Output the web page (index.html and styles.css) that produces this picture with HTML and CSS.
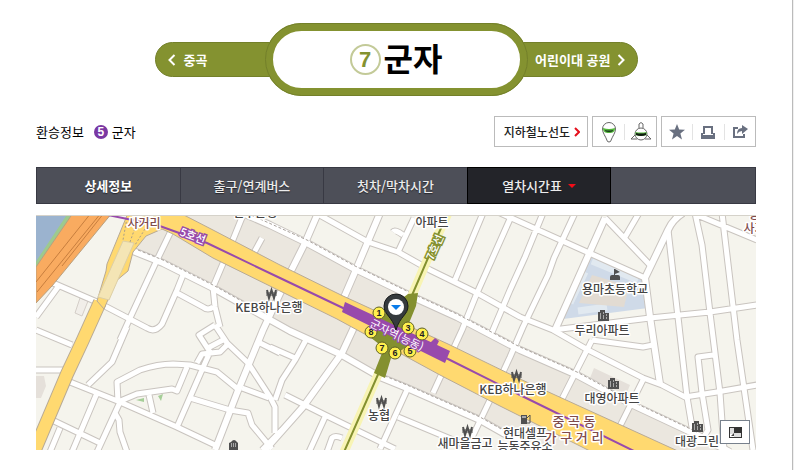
FILE: index.html
```
<!DOCTYPE html>
<html lang="ko">
<head>
<meta charset="utf-8">
<title>군자역 7호선</title>
<link rel="stylesheet" href="styles.css">
</head>
<body>
<main class="page">
  <header class="line-nav">
    <a class="side prev" href="#"><svg class="chevron" viewBox="0 0 8 12"><path d="M6.5 1 1.5 6l5 5"/></svg>중곡</a>
    <h1 class="station"><span class="line-no">7</span><span class="name">군자</span></h1>
    <a class="side next" href="#">어린이대 공원<svg class="chevron" viewBox="0 0 8 12"><path d="M1.500 1l5 5-5 5"/></svg></a>
  </header>

  <div class="info-row">
    <p class="transfer">환승정보 <a href="#"><span class="badge">5</span>군자</a></p>
    <div class="tools">
      <button class="box map-button">지하철노선도<svg class="arrow" viewBox="0 0 6 10"><path d="M1 1l4 4-4 4"/></svg></button>
      <div class="box pair">
        <button aria-label="지도 보기"><svg width="22" height="22" viewBox="0 0 22 22"><path d="M4.500 8a6.500 6.500 0 1 1 13 0c0 4-3 7-5 12.500q-1.500 1-3 0C7.500 15 4.500 12 4.500 8z" fill="#fff" stroke="#666"/><path d="M5 7q6 2 12 0c0 4-2 5-6 5S5 11 5 7z" fill="#54b63c"/><path d="M7 9q4 1 8 0c0 1-1 2-4 2s-4-1-4-2z" fill="#17351a"/></svg></button>
        <button aria-label="거리뷰 보기"><svg width="22" height="22" viewBox="0 0 22 22"><path d="M9 7V3q2-3 4 0v4M6 13l-5 5h6M16 13l5 5h-6" fill="#fff" stroke="#666"/><circle cx="11" cy="13" r="6" fill="#fff" stroke="#666"/><path d="M5.500 11q5.500 1 11 0v3q-5.500 2-11 0z" fill="#54b63c"/><path d="M6 12q5 1 10 0v2q-5 2-10 0z" fill="#101c12"/></svg></button>
      </div>
      <div class="box trio">
        <button aria-label="즐겨찾기"><svg width="16" height="16" viewBox="0 0 16 16"><path fill="#697080" d="M8 0l2.200 5.600 5.800.2-4.600 3.700L13 15.500 8 12l-5 3.500 1.600-6L0 5.800l5.800-.2z"/></svg></button>
        <button aria-label="인쇄"><svg width="16" height="16" viewBox="0 0 16 16"><path d="M4 10V3h8v7" fill="none" stroke="#697080" stroke-width="2"/><path d="M1 9h2v2h10V9h2v6H1z" fill="#697080"/></svg></button>
        <button aria-label="공유"><svg width="16" height="16" viewBox="0 0 16 16"><path d="M6 4H2v9h10v-3" fill="none" stroke="#697080" stroke-width="2"/><path d="M10 1l6 4-6 5V7Q7 7 5 10q0-6 5-6z" fill="#697080"/></svg></button>
      </div>
    </div>
  </div>

  <nav class="tabs">
    <a class="strong" href="#">상세정보</a>
    <a href="#">출구/연계버스</a>
    <a href="#">첫차/막차시간</a>
    <a class="current" href="#">열차시간표<span class="caret"></span></a>
  </nav>

  <section class="map">
    <svg class="canvas" viewBox="36 216 720 234" preserveAspectRatio="xMidYMid slice">
      <defs>
        <g id="roads">
          <path d="M243 215L230 247 213 287 215 307 220 327M215 325L227 343 248 363 270 397 275 407V433M173 227L157 260 130 318 120 340M127 327L112 362 88 385M53 283L97 302 147 328Q155 333 162 324L177 290 183 275M177 293L203 307Q208 311 213 307M58 287L36 317M36 330L72 345M36 370H64"/>
          <path d="M70 382L120 402 177 427 215 445M52 420L100 443M97 393L72 452M60 428L50 452M120 402L97 452M115 413L119 420 120 432 127 452M118 402L117 382 140 370Q158 364 173 364L190 365 217 372 239 390M242 388L269 398M118 402L137 394 172 389 177 391 187 367M149 395L153 413M177 427L205 363 210 352 199 335 215 325M197 363L202 354 220 352 227 345M206 349L223 340"/>
          <path d="M190 398L230 410 248 413 252 425 272 449M260 343L280 353M270 347L295 358M307 338L295 360 282 380 275 400M262 450L282 430M262 238L250 260"/>
          <path d="M407 390L380 449M398 417L470 447M285 395L325 415 395 449M325 417L309 452M327 452L332 438Q335 435 342 438M398 252L414 218M393 232Q395 229 403 235"/>
          <path d="M316 213L368 242 398 252 430 270 477 293 520 317 553 330 588 350 643 378 662 385 685 397 717 392 757 385M498 212L587 252 645 278M543 213L525 257 510 290 490 337"/>
          <path d="M483 213L455 280M510 219L477 293 462 330 433 393M575 213L554 258 548 275 523 327 510 357 490 400 466 450M592 340L560 403M605 218L650 265M639 213L625 237"/>
          <path d="M668 230L678 317 687 397 692 427 700 443M695 213L702 245 710 313 720 393 724 450M722 213L737 340 753 450M697 215L757 240M553 330L650 318 710 312 757 305M592 340L643 347 653 345M643 380L617 432M713 355L698 357 702 393 708 430 700 443"/>
        </g>
        <g id="avenues">
          <path d="M215 450L237 393 263 330 283 287 305 243 318 213M265 450L303 407 342 353 355 325M342 302L358 265 380 213M605 218L555 330M683 213Q673 219 668 230L645 278 650 317 660 384"/>
          <path d="M133 251L163 263 213 288 247 307 290 331 340 354 380 377 407 388 480 420 503 433 540 450"/>
          <path d="M240 212L270 225 307 243 353 268 413 297 457 317 520 350 577 375 633 405 697 435 730 452"/>
        </g>
        <g id="apartment"><path d="M0 2V11H11V3H7V0H2V2z" fill="#505050"/><path d="M2 4h1M5 3h1M2 6h1M5 6h1M8 5h1M2 8h1M5 8h1M8 8h1" stroke="#fff"/></g>
        <g id="bank" fill="none" stroke="#505050"><path d="M1 0l2 8 2.500-8L8 8l2-8" stroke-width="2"/><path d="M0 3h11M0 5h11"/></g>
      </defs>

      <rect x="36" y="215" width="720" height="235" fill="#f5f4ed"/>
      <path class="block" d="M165 213H245L307 243 353 268 413 297 457 317 520 350 577 375 633 405 697 435 730 452H545L480 420 380 377 290 331 213 288 133 251z"/>
      <path d="M36 213H70L36 268z" fill="#9bb3cf"/>
      <path d="M71 213L36 266" stroke="#9dca8e" stroke-width="5"/>
      <path d="M587 254L645 279 648 308 563 319z" fill="#cfdae8"/>
      <path d="M592 261L638 280M585 272L570 303M578 311L607 307" stroke="#e1e9f0" stroke-width="7"/>
      <path d="M592 275L629 286 624 307 579 303z" fill="#e2dbd2"/>
      <path d="M36 376h8l2 10-5 12h-5zM594 368l36 17-4 10-36-17z" fill="#e5e0da"/>
      <path d="M136 400l8-2v4zM158 396l5-2-2 7z" fill="#a5ce98"/>
      <path d="M80 298l8 3-6 15-7-3z" fill="#f1eee9" stroke="#d4cec8"/>

      <use href="#roads" class="casing"/>
      <use href="#avenues" class="casing wide"/>
      <use href="#roads" class="road"/>
      <use href="#avenues" class="road wide"/>
      <path class="steps" d="M251 215L307 240 353 265 413 294 457 314 520 347 577 372 633 402 697 432M138 250L163 260 213 285 247 304M380 374L407 385 480 417 503 430"/>

      <path d="M73 213H112L52 286 36 303V267z" fill="#f9ab60" stroke="#b9a07f"/>
      <path d="M101 213L37 292M104 213L62 266M91 213L36 282" fill="none" stroke="#c77e3e"/>
      <path class="main-casing" d="M100 302L82 342 67 374 34 452"/>
      <path class="main-road" d="M100 302L82 342 67 374 34 452"/>
      <path d="M128 213H180L213 230 280 265 343 296 448 344 520 379 680 452H592L500 406 440 375 337 319 213 258 173 234 162 229 146 236 133 252 128 271 116 281 104 309 97 301 106 271 107 264z" fill="#ffd970" stroke="#b8aa95"/>
      <path d="M123 241L134 243 109 300 98 297z" fill="#f4e5b5" stroke="#ddcfa5"/>
      <path d="M127 218L123 240M136 225L130 242M145 229L135 245" stroke="#a89d8a" stroke-dasharray="2 2"/>
      <path class="subway-seven-road" d="M448 213L437 237 410 300M380 370L344 452"/>
      <path class="subway-seven" d="M448 213L437 237 410 300M380 370L344 452"/>
      <path d="M408 294L418 293 416 306 407 328 410 344 391 358 385 378 374 373 384 348 370 337 388 309z" fill="#84902f"/>
      <path class="subway-five" d="M103 214L157 225 207 243 280 278 343 308 448 359 520 395 636 452"/>
      <path d="M345 302L450 351 445 363 342 312zM431 342l4-4 4 3-3 6z" fill="#984aac"/>

      <g class="line-name five"><text transform="translate(179 235) rotate(21)">5호선</text></g>
      <g class="line-name seven"><text transform="translate(433 261) rotate(-66)">7호선</text></g>
      <g class="exits">
        <circle cx="379" cy="313" r="6"/><circle cx="408" cy="328" r="6"/><circle cx="422" cy="334" r="6"/><circle cx="371" cy="332" r="6"/><circle cx="382" cy="348" r="6"/><circle cx="395" cy="353" r="6"/><circle cx="410" cy="351" r="6"/>
        <text x="379" y="316">1</text><text x="408" y="331">3</text><text x="422" y="337">4</text><text x="371" y="335">8</text><text x="382" y="351">7</text><text x="395" y="356">6</text><text x="410" y="354">5</text>
      </g>
      <text class="station-name" transform="translate(369 326) rotate(26)">군자역(능동)</text>
      <path d="M396 330C392 316 384 315 384 306a12 12 0 0 1 24 0c0 9-8 10-12 24z" fill="#353a3d" stroke="#16191b"/>
      <circle cx="396" cy="307" r="8" fill="#fff"/><path d="M391 305h10l-5 5z" fill="#087bea"/>

      <g class="place">
        <text x="269" y="312">KEB하나은행</text><text x="432" y="227">아파트</text>
        <text x="615" y="294">용마초등학교</text><text x="602" y="335">두리아파트</text>
        <text x="513" y="394">KEB하나은행</text><text x="612" y="403">대영아파트</text>
        <text x="379" y="420">농협</text><text x="465" y="448">새마을금고</text>
        <text x="525" y="438">현대셀프</text><text x="525" y="451">능동주유소</text>
        <text x="697" y="446">대광그린</text><text x="255" y="217">신구은행</text>
      </g>
      <g class="crossing">
        <text x="143" y="215">군자</text><text x="144" y="228">사거리</text>
        <text class="spaced" x="574" y="426">중 곡 동</text><text class="spaced" x="574" y="442">가 구 거 리</text>
        <text x="760" y="219">중곡</text><text x="760" y="233">사거리</text>
      </g>
      <use href="#bank" x="266" y="290"/><use href="#bank" x="376" y="398"/><use href="#bank" x="511" y="372"/><use href="#bank" x="462" y="427"/>
      <use href="#apartment" x="598" y="310"/><use href="#apartment" x="608" y="378"/><use href="#apartment" x="692" y="421"/>
      <path d="M610 280v-3q0-2 2-2h2v-6h1l5 3-5 2v1h3q2 0 2 2v3z" fill="#505050"/>
      <path d="M229 450v-7l2-1q3-4 6 0l1 1v7z" fill="#505050"/><path d="M231 444h6M231 446h6" stroke="#fff" stroke-dasharray="1 1"/>
      <path d="M521 424v-9h6v9z" fill="#505050"/><path d="M522 417h4" stroke="#fff"/><path d="M527 418l3-3v8h-3" fill="none" stroke="#505050"/>
    </svg>
    <button class="overview" aria-label="미니맵"><svg width="13" height="11" viewBox="0 0 13 11"><rect x=".5" y=".5" width="12" height="10" fill="#ddd" stroke="#333"/><path d="M5 1h7v5H5z" fill="#333"/><path d="M1 10V7h4v3z" fill="#fff"/><path d="M2 9l3-3v3z" fill="#444"/></svg></button>
  </section>
</main>
</body>
</html>
```
FILE: styles.css
```
* { box-sizing: border-box; }
body {
  margin: 0;
  background: #f0f0f0;
  color: #000;
  font: 13px/16px "Noto Sans CJK KR", "Liberation Sans", sans-serif;
}
a { color: inherit; text-decoration: none; }
button { padding: 0; border: 0; background: none; font: inherit; color: inherit; cursor: pointer; }
svg { display: block; }
.page {
  min-height: 100vh;
  margin-right: 1px;
  padding: 23px 36px 20px;
  border-right: 1px solid #bbb;
  background: #fff;
}

.line-nav { display: flex; align-items: center; justify-content: center; }
.side {
  display: flex;
  align-items: center;
  gap: 8px;
  width: 130px;
  height: 35px;
  padding: 0 12px;
  border: 1px solid #73802a;
  background: #849230;
  color: #fff;
  font-weight: 700;
}
.prev { margin-right: -20px; border-radius: 18px 0 0 18px; }
.next { gap: 6px; margin-left: -20px; border-radius: 0 18px 18px 0; justify-content: flex-end; }
.chevron { width: 8px; height: 12px; fill: none; stroke: #fff; stroke-width: 2; }
.station {
  position: relative;
  display: flex;
  align-items: center;
  justify-content: center;
  gap: 3px;
  width: 263px;
  height: 73px;
  margin: 0;
  border: 8px solid #849230;
  border-radius: 37px;
  outline: 1px solid #73802a;
  outline-offset: -1px;
  background: #fff;
  font-size: 32px;
  line-height: 40px;
}
.name { padding-bottom: 6px; }
.line-no {
  width: 31px;
  height: 31px;
  border: 2px solid #c3ca98;
  border-radius: 50%;
  color: #849230;
  font: bold 22px/27px "Liberation Sans", sans-serif;
  text-align: center;
}

.info-row { display: flex; align-items: center; justify-content: space-between; margin: 20px 0; }
.transfer, .transfer a { display: flex; align-items: center; margin: 0; }
.transfer { gap: 10px; }
.transfer a { gap: 4px; }
.badge {
  width: 14px;
  height: 14px;
  border-radius: 50%;
  background: #7a38a3;
  color: #fff;
  font: bold 12px/14px "Liberation Sans", sans-serif;
  text-align: center;
}
.tools { display: flex; gap: 4px; }
.box { display: flex; align-items: center; height: 31px; border: 1px solid #bbb; }
.map-button { gap: 4px; padding: 0 7px 0 9px; font-size: 12px; font-weight: 500; color: #222; }
.arrow { width: 6px; height: 10px; fill: none; stroke: #e5101c; stroke-width: 2; }
.pair button, .trio button {
  display: flex;
  flex: 1;
  align-items: center;
  justify-content: center;
  height: 16px;
}
.box button + button { border-left: 1px solid #e3e3e3; }
.pair { width: 65px; }
.trio { width: 95px; }

.tabs {
  display: grid;
  grid-template-columns: repeat(5, 1fr);
  height: 37px;
  border: 1px solid #383943;
  background: #4d4f58;
  color: #ececec;
}
.tabs a {
  display: flex;
  align-items: center;
  justify-content: center;
  gap: 6px;
  border-right: 1px solid #383943;
  font-weight: 500;
  text-shadow: 0 1px 1px #25262c;
}
.tabs .strong { color: #fff; font-weight: 700; }
.tabs .current { margin: -1px 0 -1px -1px; border: 1px solid #000; background: #232429; }
.caret { border: 4px solid transparent; border-top-color: #f20d18; border-bottom: 0; }

.map { position: relative; margin-top: 11px; border-top: 1px solid #d5d2ca; }
.canvas { width: 100%; height: 234px; font-family: "Noto Sans CJK KR", sans-serif; }
.block { fill: #ebe7df; }
.casing { fill: none; stroke: #c9c4bf; stroke-width: 7; stroke-linejoin: round; }
.casing.wide { stroke-width: 8; }
.road { fill: none; stroke: #fff; stroke-width: 5; stroke-linejoin: round; }
.road.wide { stroke-width: 6; }
.steps { fill: none; stroke: #aaa39d; stroke-width: 1; stroke-dasharray: 3 2; }
.main-casing { fill: none; stroke: #b8aa95; stroke-width: 14; }
.main-road { fill: none; stroke: #ffd970; stroke-width: 12; }
.subway-seven-road { fill: none; stroke: #f8f4b4; stroke-width: 9; }
.subway-seven { fill: none; stroke: #84902f; stroke-width: 2; }
.subway-five { fill: none; stroke: #984aac; stroke-width: 2; }
.line-name { font-size: 11px; font-weight: 500; fill: #fff; paint-order: stroke; stroke-width: 3; }
.five { stroke: #984aac; }
.seven { stroke: #84902f; }
.exits circle { fill: #fff04e; stroke: #5e6024; }
.exits text { font: bold 9px "Liberation Sans", sans-serif; text-anchor: middle; fill: #222; }
.station-name { font-size: 11px; fill: #fff; paint-order: stroke; stroke: #984aac; stroke-width: 2; }
.place text, .crossing text {
  text-anchor: middle;
  font-size: 12px;
  font-weight: 500;
  fill: #444;
  paint-order: stroke;
  stroke: #fff;
  stroke-width: 3;
  stroke-linejoin: round;
}
.crossing text { fill: #804b4b; }
.crossing .spaced { font-size: 13px; }
.overview {
  position: absolute;
  right: 6px;
  bottom: 6px;
  display: flex;
  align-items: center;
  justify-content: center;
  width: 30px;
  height: 24px;
  border: 1px solid #77808c;
  background: #fff;
}
```
